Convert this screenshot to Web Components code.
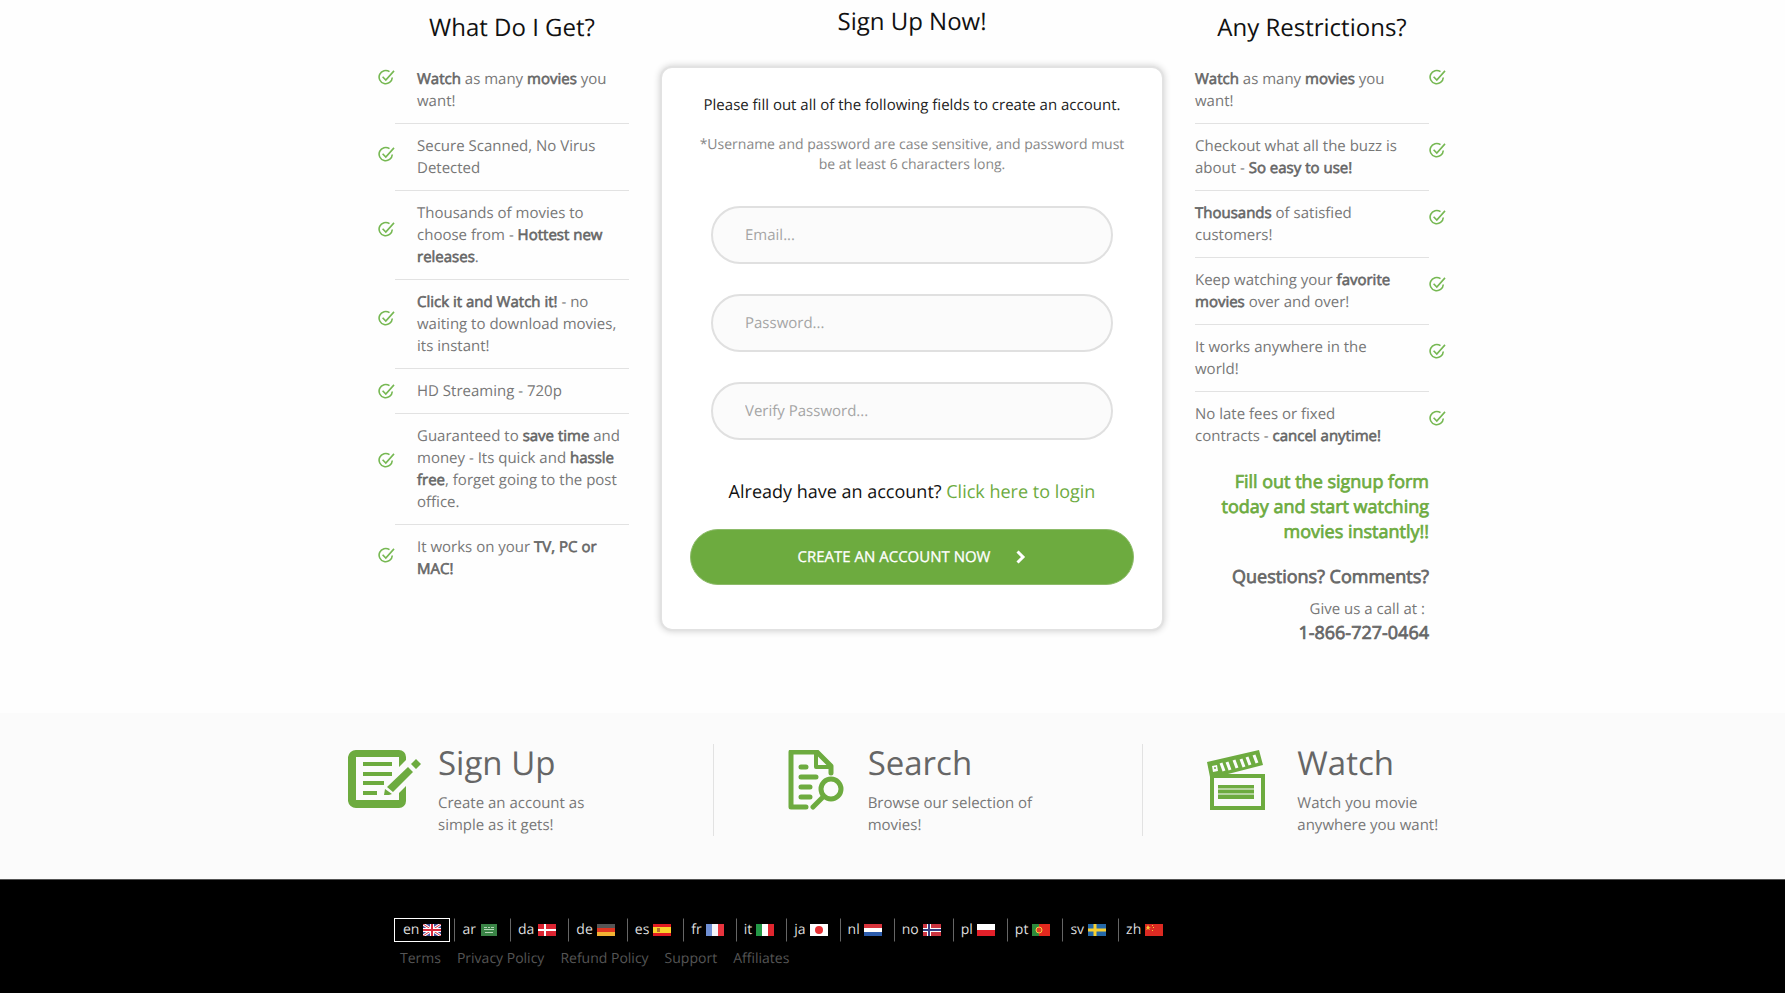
<!DOCTYPE html>
<html lang="en">
<head>
<meta charset="utf-8">
<meta name="viewport" content="width=device-width, initial-scale=1">
<title>Sign Up</title>
<style>
    body {
        margin: 0;
        min-height: 100vh;
        display: flex;
        flex-direction: column;
        font: 15px/22px "Open Sans", sans-serif;
        text-rendering: geometricPrecision;
        color: #777;
        background: #fefefe;
    }

    /* one font weight only, bold text is a thickened regular */
    b {
        font-weight: 400;
        color: #666;
        -webkit-text-stroke: 0.04em currentColor;
    }

    a {
        color: #6dab3f;
        text-decoration: none;
    }
</style>
</head>
<body>
<sign-up-section>
    <feature-list slot="left" heading="What Do I Get?">
        <feature-item><b>Watch</b> as many <b>movies</b> you want!</feature-item>
        <feature-item>Secure Scanned, No Virus Detected</feature-item>
        <feature-item>Thousands of movies to choose from - <b>Hottest new releases</b>.</feature-item>
        <feature-item><b>Click it and Watch it!</b> - no waiting to download movies, its instant!</feature-item>
        <feature-item>HD Streaming - 720p</feature-item>
        <feature-item>Guaranteed to <b>save time</b> and money - Its quick and <b>hassle free</b>, forget going to the post office.</feature-item>
        <feature-item>It works on your <b>TV, PC or MAC!</b></feature-item>
    </feature-list>
    <sign-up-form slot="form"></sign-up-form>
    <feature-list slot="right" heading="Any Restrictions?" side="right">
        <feature-item side="right"><b>Watch</b> as many <b>movies</b> you want!</feature-item>
        <feature-item side="right">Checkout what all the buzz is about - <b>So easy to use!</b></feature-item>
        <feature-item side="right"><b>Thousands</b> of satisfied customers!</feature-item>
        <feature-item side="right">Keep watching your <b>favorite movies</b> over and over!</feature-item>
        <feature-item side="right">It works anywhere in the world!</feature-item>
        <feature-item side="right">No late fees or fixed contracts - <b>cancel anytime!</b></feature-item>
        <contact-info slot="footer"></contact-info>
    </feature-list>
</sign-up-section>

<steps-bar>
    <step-card heading="Sign Up">
        <svg slot="icon" width="74" height="60" viewBox="0 0 74 60" fill="#6dab3f" aria-hidden="true">
            <path d="M8 0h43a7 7 0 0 1 7 7v3l-7 7V7H8v43h43v-7l7-7v15a7 7 0 0 1-7 7H8a8 8 0 0 1-8-7V7a8 8 0 0 1 8-7z"/>
            <path d="M15 12h29v4H15zM15 22h29v4H15zM15 31h21v4H15zM15 41h14v4H15z"/>
            <path d="M60 17l5 5-20 20-6-5zM37 39l7 5-3 1h-5zM63 14l5-5 5 5-5 5z"/>
        </svg>
        Create an account as simple as it gets!
    </step-card>
    <step-card heading="Search">
        <svg slot="icon" width="74" height="60" viewBox="0 0 74 60" fill="none" stroke="#6dab3f" stroke-linecap="round" stroke-linejoin="round" aria-hidden="true">
            <path d="M28 57H13V2h26l14 14v7" stroke-width="5"/>
            <path d="M38 3v14h14" stroke-width="4"/>
            <path d="M23 17h5M23 27h15M23 37h9M23 47h9" stroke-width="5"/>
            <circle cx="53" cy="39" r="10" stroke-width="5"/>
            <path d="M45 47L35 57" stroke-width="5"/>
        </svg>
        Browse our selection of movies!
    </step-card>
    <step-card heading="Watch">
        <svg slot="icon" width="74" height="60" viewBox="0 0 74 60" fill="#6dab3f" aria-hidden="true">
            <path fill-rule="evenodd" d="M0 12L52 0l4 15-35 9h37v36H3V27zM7 28v28h47V28z"/>
            <path d="M11 35h36v14H11z"/>
            <path d="M11 39h36M11 44h36" stroke="#fbfbfb"/>
            <path d="M14 13l3 8M20 12l3 8M27 10l3 8M34 9l3 8M40 7l3 8M47 5l3 8" stroke="#fbfbfb" stroke-width="3"/>
            <path d="M5 16l5-1 1 6-5 1z" fill="#fbfbfb"/>
            <circle cx="8" cy="18" r="1"/>
        </svg>
        Watch you movie anywhere you want!
    </step-card>
</steps-bar>

<site-footer></site-footer>

<script>
// Two lists with the form between them
class SignUpSection extends HTMLElement {
    constructor() {
        super();
        this.attachShadow({ mode: "open" });
        this.shadowRoot.innerHTML = /*html*/ `
            <style>
                :host {
                    display: block;
                    width: 100%;
                    max-width: 1107px;
                    box-sizing: border-box;
                    margin: 0 auto;
                    padding: 0 0 67px 39px;
                }
                main {
                    display: grid;
                    grid-template-columns: 251px 1fr 251px;
                    column-gap: 31px;
                    align-items: start;
                }
            </style>
            <main>
                <slot name="left"></slot>
                <slot name="form"></slot>
                <slot name="right"></slot>
            </main>
        `;
    }
}

class FeatureList extends HTMLElement {
    constructor() {
        super();
        this.attachShadow({ mode: "open" });
        this.shadowRoot.innerHTML = /*html*/ `
            <style>
                :host { display: block; }
                h2 {
                    margin: 0 0 0 17px;
                    padding: 11px 0 12px;
                    font-size: 24px;
                    line-height: 34px;
                    font-weight: 400;
                    color: #111;
                    text-align: center;
                }
                :host([side="right"]) h2 { margin: 0 17px 0 0; }
            </style>
            <h2>${this.getAttribute("heading")}</h2>
            <div role="list"><slot></slot></div>
            <slot name="footer"></slot>
        `;
    }
}

class FeatureItem extends HTMLElement {
    constructor() {
        super();
        this.attachShadow({ mode: "open" });
        this.shadowRoot.innerHTML = /*html*/ `
            <style>
                :host {
                    display: grid;
                    grid-template-columns: 17px 1fr;
                }
                .text {
                    padding: 11px 0 11px 22px;
                    border-bottom: 1px solid #e2e2e2;
                }
                .icon {
                    display: grid;
                    grid-template-rows: 4fr auto 7fr;
                }
                svg {
                    grid-row: 2;
                    width: 17px;
                    height: 45px;
                }
                :host(:first-of-type) .icon { grid-template-rows: 0 auto 1fr; }
                :host(:first-of-type) svg { height: 41px; }
                :host(:last-of-type) .text { border: 0; }

                :host([side="right"]) { grid-template-columns: 1fr 17px; }
                :host([side="right"]) .text {
                    padding-left: 0;
                    padding-right: 27px;
                }
                :host([side="right"]) .icon {
                    order: 1;
                    grid-template-rows: 1fr auto 4fr;
                }
                :host([side="right"]:first-of-type) .icon { grid-template-rows: 0 auto 1fr; }
            </style>
            <div class="icon">
                <svg viewBox="0 0 17 16" fill="none" stroke="#76b852" stroke-width="1.6" aria-hidden="true">
                    <path d="M11.5 2.2A6.6 6.6 0 1 0 14.3 8"/>
                    <path d="M4.6 7.2l3.2 3.4L16 1.4"/>
                </svg>
            </div>
            <div class="text"><slot></slot></div>
        `;
        this.setAttribute("role", "listitem");
    }
}

class ContactInfo extends HTMLElement {
    constructor() {
        super();
        this.attachShadow({ mode: "open" });
        this.shadowRoot.innerHTML = /*html*/ `
            <style>
                :host {
                    display: block;
                    margin-right: 17px;
                    padding-top: 12px;
                    text-align: right;
                }
                h3, p { margin: 0; }
                h3, .phone {
                    font-size: 18px;
                    line-height: 25px;
                    font-weight: 400;
                    color: #666;
                    -webkit-text-stroke: 0.04em currentColor;
                }
                h3.call {
                    margin-bottom: 20px;
                    color: #6dab3f;
                }
                .give {
                    margin-top: 8px;
                    padding: 0 4px 1px 0;
                }
            </style>
            <h3 class="call">Fill out the signup form today and start watching movies instantly!!</h3>
            <h3>Questions? Comments?</h3>
            <p class="give">Give us a call at :</p>
            <p class="phone">1-866-727-0464</p>
        `;
    }
}

class PillInput extends HTMLElement {
    constructor() {
        super();
        this.attachShadow({ mode: "open" });
        const hint = this.getAttribute("placeholder");
        this.shadowRoot.innerHTML = /*html*/ `
            <style>
                :host { display: block; }
                input {
                    display: block;
                    width: 100%;
                    height: 58px;
                    box-sizing: border-box;
                    padding: 0 32px;
                    border: 2px solid #e0e0e0;
                    border-radius: 29px;
                    background: #fbfbfb;
                    font: inherit;
                    text-rendering: inherit;
                    color: #555;
                }
                input::placeholder { color: #a5a5a5; }
            </style>
            <input type="${this.getAttribute("type")}" placeholder="${hint}" aria-label="${hint.replace("...", "")}">
        `;
    }
}

window.customElements.define("pill-input", PillInput);

class SignUpForm extends HTMLElement {
    constructor() {
        super();
        this.attachShadow({ mode: "open" });
        this.shadowRoot.innerHTML = /*html*/ `
            <style>
                :host { display: block; }
                h2 {
                    margin: 0;
                    padding: 5px 0 27px;
                    font-size: 24px;
                    line-height: 34px;
                    font-weight: 400;
                    color: #111;
                    text-align: center;
                }
                form {
                    box-sizing: border-box;
                    padding: 26px 28px 44px;
                    border: 2px solid #e2e2e2;
                    border-radius: 12px;
                    box-shadow: 0 0 7px rgba(0, 0, 0, 0.2);
                    background: #fff;
                    text-align: center;
                }
                p { margin: 0; }
                .lead { color: #222; }
                .note {
                    margin: 19px 0 31px;
                    font-size: 14px;
                    line-height: 20px;
                    color: #888;
                }
                .fields {
                    display: grid;
                    gap: 30px;
                    padding: 0 21px;
                }
                .login {
                    margin: 38px 0 23px;
                    font-size: 18px;
                    line-height: 28px;
                    color: #111;
                }
                a {
                    color: #6dab3f;
                    text-decoration: none;
                }
                button {
                    display: flex;
                    align-items: center;
                    justify-content: center;
                    gap: 26px;
                    width: 100%;
                    height: 56px;
                    border: 1px solid #8dbb6a;
                    border-radius: 28px;
                    background: #6dab3f;
                    font: inherit;
                    text-rendering: inherit;
                    color: #fff;
                    -webkit-text-stroke: 0.02em currentColor;
                }
            </style>
            <h2>Sign Up Now!</h2>
            <form>
                <p class="lead">Please fill out all of the following fields to create an account.</p>
                <p class="note">*Username and password are case sensitive, and password must be at least 6 characters long.</p>
                <div class="fields">
                    <pill-input type="email" placeholder="Email..."></pill-input>
                    <pill-input type="password" placeholder="Password..."></pill-input>
                    <pill-input type="password" placeholder="Verify Password..."></pill-input>
                </div>
                <p class="login">Already have an account? <a href="#login">Click here to login</a></p>
                <button type="button">CREATE AN ACCOUNT NOW
                    <svg width="10" height="14" viewBox="0 0 10 14" fill="none" stroke="#fff" stroke-width="3" aria-hidden="true"><path d="M1.5 1.5L7 7l-5.500 5.500"/></svg>
                </button>
            </form>
        `;
    }
}

class StepsBar extends HTMLElement {
    constructor() {
        super();
        this.attachShadow({ mode: "open" });
        this.shadowRoot.innerHTML = /*html*/ `
            <style>
                :host {
                    display: block;
                    background: #fbfbfb;
                }
                section {
                    display: grid;
                    grid-template-columns: repeat(3, 1fr);
                    max-width: 1361px;
                    box-sizing: border-box;
                    margin: 0 auto;
                    padding: 31px 0 43px 72px;
                }
            </style>
            <section><slot></slot></section>
        `;
    }
}

class StepCard extends HTMLElement {
    constructor() {
        super();
        this.attachShadow({ mode: "open" });
        this.shadowRoot.innerHTML = /*html*/ `
            <style>
                :host {
                    display: flex;
                    gap: 16px;
                    align-items: flex-start;
                    padding-left: 64px;
                    border-right: 1px solid #e2e2e2;
                }
                :host(:last-of-type) { border: 0; }
                .icon { padding-top: 6px; }
                .text { width: 176px; }
                h2 {
                    margin: 0 0 10px;
                    font-size: 33px;
                    line-height: 38px;
                    font-weight: 400;
                    color: #666;
                    white-space: nowrap;
                }
            </style>
            <div class="icon"><slot name="icon"></slot></div>
            <div class="text">
                <h2>${this.getAttribute("heading")}</h2>
                <slot></slot>
            </div>
        `;
    }
}

// Flags, drawn on an 18x12 grid
const flags = {
    en: `<path fill="#46519b" d="M0 0h18v12H0z"/><path stroke="#fff" stroke-width="3" d="M0 0l18 12M18 0L0 12"/><path stroke="#d8283c" d="M0 0l18 12M18 0L0 12"/><path stroke="#fff" stroke-width="4" d="M9 0v12M0 6h18"/><path stroke="#d8283c" stroke-width="2" d="M9 0v12M0 6h18"/>`,
    ar: `<path fill="#3a8446" d="M1 0h16v12H1z"/><path stroke="#b5d6b8" d="M4 3.500h3M8 3.500h2M11 3.500h3M4 5.500h10M5 8.500h8"/>`,
    da: `<path fill="#dc2431" d="M0 0h18v12H0z"/><path stroke="#fff" stroke-width="2" d="M7 0v12M0 6h18"/>`,
    de: `<path fill="#555" d="M0 0h18v4H0z"/><path fill="#e03420" d="M0 4h18v4H0z"/><path fill="#f2b233" d="M0 8h18v4H0z"/>`,
    es: `<path fill="#e01b22" d="M0 0h18v12H0z"/><path fill="#fbd22c" d="M0 3h18v6H0z"/><path fill="#b5702c" d="M4 4h3v4H4z"/>`,
    fr: `<path fill="#6f8fd4" d="M0 0h6v12H0z"/><path fill="#f4f4f8" d="M6 0h6v12H6z"/><path fill="#e8343e" d="M12 0h6v12h-6z"/>`,
    it: `<path fill="#239746" d="M0 0h6v12H0z"/><path fill="#fff" d="M6 0h6v12H6z"/><path fill="#e0262f" d="M12 0h6v12h-6z"/>`,
    ja: `<path fill="#fff" d="M0 0h18v12H0z"/><circle cx="9" cy="6" r="4" fill="#e62e32"/>`,
    nl: `<path fill="#d8343c" d="M0 0h18v4H0z"/><path fill="#fff" d="M0 4h18v4H0z"/><path fill="#2c5cac" d="M0 8h18v4H0z"/>`,
    no: `<path fill="#cc3540" d="M0 0h18v12H0z"/><path stroke="#fff" stroke-width="4" d="M6 0v12M0 6h18"/><path stroke="#333c80" stroke-width="2" d="M6 0v12M0 6h18"/>`,
    pl: `<path fill="#fff" d="M0 0h18v6H0z"/><path fill="#e2202a" d="M0 6h18v6H0z"/>`,
    pt: `<path fill="#2c8a3c" d="M0 0h7v12H0z"/><path fill="#e2281e" d="M7 0h11v12H7z"/><circle cx="7" cy="6" r="3" fill="#e03c28" stroke="#f5d040"/>`,
    sv: `<path fill="#2468a8" d="M0 0h18v12H0z"/><path stroke="#f8d030" stroke-width="3" d="M7 0v12M0 6h18"/>`,
    zh: `<path fill="#dc2a22" d="M0 0h18v12H0z"/><path fill="#f8c838" d="M3 1l1 2h2L4 4l1 2-2-1-2 1 1-2-1-1h1zM7 1h1v1H7zM8 3h1v1H8zM7 6h1v1H7z"/>`
};

class LangLink extends HTMLElement {
    constructor() {
        super();
        this.attachShadow({ mode: "open" });
        const code = this.getAttribute("code");
        this.shadowRoot.innerHTML = /*html*/ `
            <style>
                :host { display: block; }
                a {
                    display: flex;
                    align-items: center;
                    gap: 4px;
                    padding: 0 7px;
                    border: 1px solid transparent;
                    border-left-color: #666;
                    color: #ddd;
                    text-decoration: none;
                }
                :host([current]) a {
                    border-color: #fff;
                    padding: 0 8px;
                }
            </style>
            <a href="#${code}">${code}<svg width="18" height="12" viewBox="0 0 18 12" aria-hidden="true">${flags[code]}</svg></a>
        `;
    }
}

window.customElements.define("lang-link", LangLink);

class SiteFooter extends HTMLElement {
    constructor() {
        super();
        this.attachShadow({ mode: "open" });
        const langs = Object.keys(flags)
            .map((code) => `<lang-link code="${code}" ${code === "en" ? "current" : ""}></lang-link>`)
            .join("");
        const links = ["Terms", "Privacy Policy", "Refund Policy", "Support", "Affiliates"]
            .map((name) => `<a href="#${name.toLowerCase().replace(" ", "-")}">${name}</a>`)
            .join("");
        this.shadowRoot.innerHTML = /*html*/ `
            <style>
                :host {
                    display: block;
                    flex: 1;
                    border-top: 1px solid #555;
                    background: #000;
                    font-size: 14px;
                }
                footer {
                    max-width: 997px;
                    margin: 0 auto;
                    padding: 38px 0 20px;
                }
                nav {
                    display: flex;
                    flex-wrap: wrap;
                }
                .langs { gap: 4px; }
                .links {
                    gap: 16px;
                    padding: 6px;
                }
                .links a {
                    color: #555;
                    text-decoration: none;
                }
            </style>
            <footer>
                <nav class="langs" aria-label="Languages">${langs}</nav>
                <nav class="links">${links}</nav>
            </footer>
        `;
    }
}

window.customElements.define("sign-up-section", SignUpSection);
window.customElements.define("feature-list", FeatureList);
window.customElements.define("feature-item", FeatureItem);
window.customElements.define("contact-info", ContactInfo);
window.customElements.define("sign-up-form", SignUpForm);
window.customElements.define("steps-bar", StepsBar);
window.customElements.define("step-card", StepCard);
window.customElements.define("site-footer", SiteFooter);
</script>
</body>
</html>
